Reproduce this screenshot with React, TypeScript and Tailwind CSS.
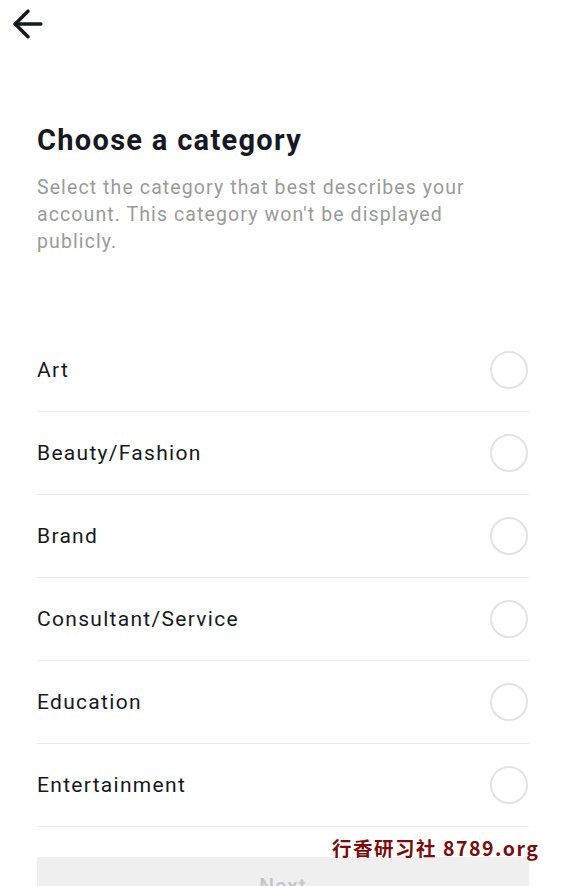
import { ArrowLeft } from "lucide-react";

const CATEGORIES = [
  "Art",
  "Beauty/Fashion",
  "Brand",
  "Consultant/Service",
  "Education",
  "Entertainment",
];

export default function App() {
  return (
    <div className="relative h-[886px] w-[566px] overflow-hidden bg-white font-['Roboto',sans-serif] text-[#161823]">
      {/* Header */}
      <div className="flex h-[47px] items-center pl-[6px]">
        <ArrowLeft size={44} strokeWidth={1.9} />
      </div>

      <div className="px-[37px]">
        <h1 className="mt-[74px] text-[29px] font-bold leading-[38px] tracking-[1.3px]">
          Choose a category
        </h1>
        <p className="mt-[15px] text-[19.5px] leading-[27px] tracking-[1.1px] text-[#9a9a9a]">
          Select the category that best describes your account. This category won't be displayed
          publicly.
        </p>

        <ul className="mt-[74px]">
          {CATEGORIES.map((name) => (
            <li
              key={name}
              className="flex h-[83px] items-center justify-between border-b border-[#ebebeb]"
            >
              <span className="text-[21px] leading-none tracking-[1.3px]">{name}</span>
              <span className="mr-[1px] h-[38px] w-[38px] rounded-full border-2 border-[#e3e3e3]" />
            </li>
          ))}
        </ul>

        <button
          type="button"
          className="mt-[30px] flex h-[56px] w-full items-start justify-center rounded-[3px] bg-[#efefef] pt-[19px] text-[21px] font-medium leading-none tracking-[1px] text-[#c4c4c4]"
        >
          Next
        </button>
      </div>

      {/* Watermark */}
      <div className="absolute left-[332px] top-[836px] font-['Noto_Sans_CJK_SC',sans-serif] text-[19.5px] font-bold leading-[24px] tracking-[1.5px] text-[#7a0c0c]">
        行香研习社 8789.org
      </div>
    </div>
  );
}
